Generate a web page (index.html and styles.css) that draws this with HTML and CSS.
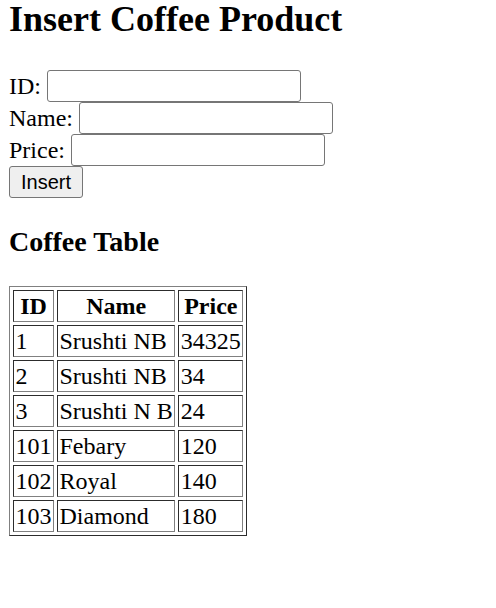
FILE: index.html
```html
<!DOCTYPE html>
<html lang="en">

<head>
    <meta charset="UTF-8">
    <meta name="viewport" content="width=device-width, initial-scale=1.0">
    <title>Insert Coffee Product</title>
    <link rel="stylesheet" href="styles.css">
</head>

<body>

    <h1>Insert Coffee Product</h1>

    <form class="coffee-form">
        <div class="field">ID: <input type="text" name="id"></div>
        <div class="field">Name: <input type="text" name="name"></div>
        <div class="field">Price: <input type="text" name="price"></div>
        <div class="field"><button type="submit">Insert</button></div>
    </form>

    <h3>Coffee Table</h3>

    <table class="coffee-table">
        <tr>
            <th>ID</th>
            <th>Name</th>
            <th>Price</th>
        </tr>
        <tr>
            <td>1</td>
            <td>Srushti NB</td>
            <td>34325</td>
        </tr>
        <tr>
            <td>2</td>
            <td>Srushti NB</td>
            <td>34</td>
        </tr>
        <tr>
            <td>3</td>
            <td>Srushti N B</td>
            <td>24</td>
        </tr>
        <tr>
            <td>101</td>
            <td>Febary</td>
            <td>120</td>
        </tr>
        <tr>
            <td>102</td>
            <td>Royal</td>
            <td>140</td>
        </tr>
        <tr>
            <td>103</td>
            <td>Diamond</td>
            <td>180</td>
        </tr>
    </table>

</body>

</html>
```

FILE: styles.css
```css
body {
    margin: 0 9px;
    font-family: "Liberation Serif", "Times New Roman", serif;
    font-size: 24px;
    color: #000;
}

h1 {
    margin: 0 0 32px;
    font-size: 36px;
    line-height: 38px;
}

/* form rows */
.field {
    height: 32px;
    line-height: 32px;
    white-space: nowrap;
}

.field input {
    width: 254px;
    height: 32px;
    box-sizing: border-box;
    margin: 0;
    padding: 1px 3px;
    vertical-align: top;
    border: 1px solid #767676;
    border-radius: 3px;
    background: #fff;
    font-family: "Liberation Sans", Arial, sans-serif;
    font-size: 20px;
}

.field button {
    width: 74px;
    height: 32px;
    box-sizing: border-box;
    margin: 0;
    padding: 0;
    vertical-align: top;
    border: 1px solid #767676;
    border-radius: 3px;
    background: #efefef;
    color: #000;
    font-family: "Liberation Sans", Arial, sans-serif;
    font-size: 20px;
}

h3 {
    margin: 28px 0 28px;
    font-size: 28px;
    line-height: 32px;
}

/* table */
.coffee-table {
    border-collapse: separate;
    border-spacing: 3px;
    border: 1px outset grey;
}

.coffee-table th,
.coffee-table td {
    padding: 1px 1.5px;
    line-height: 28px;
    border: 1px inset grey;
}

.coffee-table td {
    text-align: left;
}
```
